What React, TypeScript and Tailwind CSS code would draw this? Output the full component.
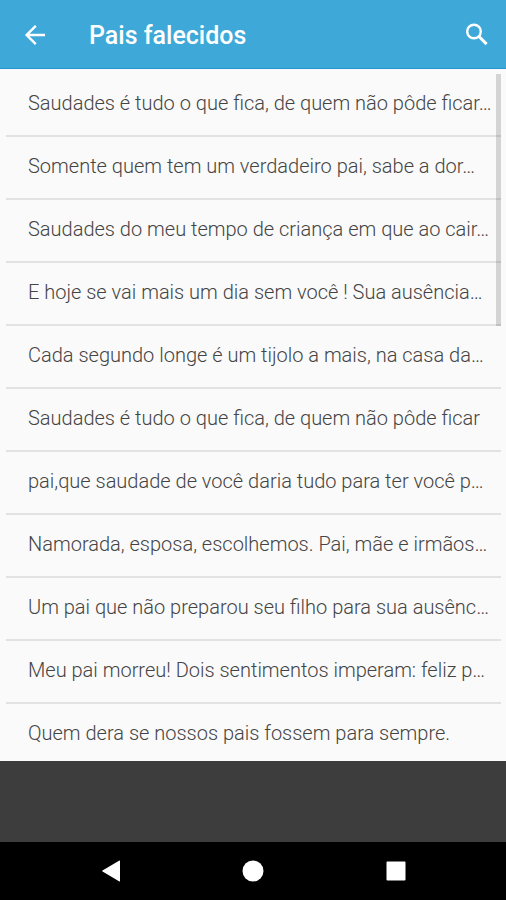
const messages = [
    'Saudades é tudo o que fica, de quem não pôde ficar…',
    'Somente quem tem um verdadeiro pai, sabe a dor…',
    'Saudades do meu tempo de criança em que ao cair…',
    'E hoje se vai mais um dia sem você ! Sua ausência…',
    'Cada segundo longe é um tijolo a mais, na casa da…',
    'Saudades é tudo o que fica, de quem não pôde ficar',
    'pai,que saudade de você daria tudo para ter você p…',
    'Namorada, esposa, escolhemos. Pai, mãe e irmãos…',
    'Um pai que não preparou seu filho para sua ausênc…',
    'Meu pai morreu! Dois sentimentos imperam: feliz p…',
    'Quem dera se nossos pais fossem para sempre.',
]

const Header = () => {
    return (
        <header className="h-[69px] bg-[#3ea9d9] border-b border-b-[#2297cb] text-white flex items-center pl-[21px] pr-[15px] pt-0.5">
            <button type="button" aria-label="Voltar">
                <svg viewBox="0 0 28 28" className="size-7" fill="none" stroke="currentColor" strokeWidth="2.4">
                    <path d="M24 14H6M14.8 4.8 5.6 14l9.2 9.2" />
                </svg>
            </button>
            <h1 className="ml-10 pt-0.5 flex-1 text-[25px] leading-8 font-medium">Pais falecidos</h1>
            <button type="button" aria-label="Pesquisar">
                <svg viewBox="0 0 28 28" className="size-7" fill="none" stroke="currentColor">
                    <circle cx="11" cy="10.5" r="6.8" strokeWidth="2.4" />
                    <path d="m16 15.5 7.6 7.6" strokeWidth="3" />
                </svg>
            </button>
        </header>
    )
}

const MessageList = () => {
    return (
        <main className="relative bg-[#fafafa] pl-1.5 pr-[5px] pt-[5px]">
            <ul className="divide-y-2 divide-[#e2e2e2]">
                {messages.map((message, index) => (
                    <li key={index} className="pt-[17px] pb-5 last:pb-4 pl-[22px]">
                        <a href="#" className="block text-[20px] leading-6 font-light text-[#444444] whitespace-nowrap">
                            {message}
                        </a>
                    </li>
                ))}
            </ul>
            <div className="absolute top-[5px] right-[5px] w-[5px] h-[252px] bg-black/15" />
        </main>
    )
}

const NavigationBar = () => {
    return (
        <nav className="h-[58px] bg-black text-white grid grid-cols-[1fr_64px_1fr] items-center">
            <button type="button" aria-label="Voltar" className="justify-self-center">
                <svg viewBox="0 0 20 22" className="w-5 h-[22px]" fill="currentColor">
                    <path d="M18.4 .6Q19 .3 19 1v20Q19 21.7 18.4 21.4L1.5 11.6Q.8 11 1.5 10.4z" />
                </svg>
            </button>
            <button type="button" aria-label="Início" className="justify-self-center">
                <svg viewBox="0 0 22 22" className="size-[22px]" fill="currentColor">
                    <circle cx="11" cy="11" r="10.5" />
                </svg>
            </button>
            <button type="button" aria-label="Recentes" className="justify-self-center">
                <svg viewBox="0 0 20 20" className="size-5" fill="currentColor">
                    <rect x="0.5" y="0.5" width="19" height="19" rx="1" />
                </svg>
            </button>
        </nav>
    )
}

const App = () => {
    return (
        <div className="min-h-screen flex flex-col bg-[#3d3d3d] font-['Roboto',sans-serif] overflow-x-hidden">
            <Header />
            <MessageList />
            <div className="flex-1" />
            <NavigationBar />
        </div>
    )
}

export default App
